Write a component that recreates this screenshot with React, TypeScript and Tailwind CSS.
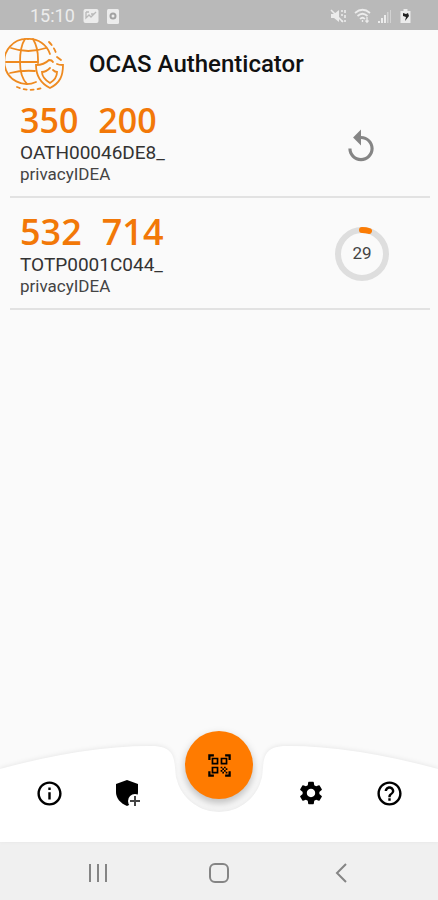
import { MdHelpOutline, MdOutlineInfo, MdQrCodeScanner, MdReplay, MdSettings } from "react-icons/md";

interface Token {
  label: string;
  issuer: string;
  otp: [string, string];
  type: "hotp" | "totp";
  remaining?: number;
}

const tokens: Token[] = [
  { label: "OATH00046DE8_", issuer: "privacyIDEA", otp: ["350", "200"], type: "hotp" },
  { label: "TOTP0001C044_", issuer: "privacyIDEA", otp: ["532", "714"], type: "totp", remaining: 29 },
];

export default function App() {
  return (
    <div className="flex min-h-screen flex-col bg-[#fafafa] font-[Roboto,sans-serif] text-black">
      <StatusBar />
      <header className="flex h-[67px] items-center gap-6 pl-[5px]">
        <Logo />
        <h1 className="text-2xl font-medium text-[#111]">OCAS Authenticator</h1>
      </header>
      <main className="flex-1">
        <ul>
          {tokens.map(t => (
            <TokenRow key={t.label} token={t} />
          ))}
        </ul>
      </main>
      <BottomNav />
      <SystemNav />
    </div>
  );
}

function StatusBar() {
  return (
    <div className="flex h-[30px] items-center justify-between bg-[#b9b9b9] pr-[27px] pl-[30px] text-[#ececec]">
      <div className="flex items-center gap-2 pt-[2px]">
        <span className="text-lg leading-none">15:10</span>
        <svg className="h-[14px] w-4" viewBox="0 0 16 14">
          <rect x="0.5" width="15" height="14" rx="2" fill="currentColor" />
          <path d="M3 3v6l3-3 2 2 5-5M3 3h3M8 5h3" fill="none" stroke="#b9b9b9" strokeWidth="1.3" />
        </svg>
        <svg className="h-[15px] w-3" viewBox="0 0 12 15">
          <rect width="12" height="15" rx="1.5" fill="currentColor" />
          <circle cx="6" cy="7" r="2.5" fill="none" stroke="#a2a2a2" strokeWidth="2" />
        </svg>
      </div>
      <div className="flex items-center gap-1 pt-[2px]">
        <svg className="h-4 w-4" viewBox="0 0 16 16" fill="currentColor">
          <path d="M1 6h3l5-4v12l-5-4H1z" />
          <path d="M1 2l12 12M12 2v2M12 6v2M12 12v2M15 2v3M15 7v3M15 12v2" fill="none" stroke="currentColor" strokeWidth="1.6" />
        </svg>
        <svg className="ml-1 h-4 w-[18px]" viewBox="0 0 18 16" fill="none" stroke="currentColor" strokeWidth="1.7">
          <path d="M1 5q7.500-6.500 15 0M3.500 8q5-4.500 10 0M6 11q2.500-2.500 5 0" />
          <path d="M8.500 12v2M13 9v5M11.500 12.500l1.500 1.700 1.500-1.700" strokeWidth="1.3" />
        </svg>
        <svg className="h-4 w-4" viewBox="0 0 16 16" fill="currentColor">
          <path d="M2 13h2v2H2zM5 10h2v5H5zM8 7h2v8H8z" />
          <path d="M11 4h1.500v11H11zM14 2h1v13h-1z" opacity="0.5" />
        </svg>
        <svg className="ml-1 h-4 w-[11px]" viewBox="0 0 11 16">
          <path d="M0.500 3h3V1h4v2h3v12h-10z" fill="currentColor" />
          <path d="M3 5l3 1 2-1 1 3-4 5 1-4-3-1z" fill="#222" />
        </svg>
      </div>
    </div>
  );
}

function Logo() {
  return (
    <svg className="h-[58px] w-[60px]" viewBox="0 0 60 58" fill="none" stroke="#ee8a20" strokeWidth="1.8" strokeLinecap="round">
      <path d="M45 19A22 22 0 0 0 23 4A22.500 22.500 0 1 0 31 47" />
      <path d="M20 4C16 10 15 18 15 27s2 17 7 22" />
      <path d="M28 4c3 5 5 12 5 20v4" />
      <path d="M6 13q17 6 35 0M1 27h31M5 38q12-3 25-2" />
      <path d="M44 7q5 5 7 11" strokeDasharray="4 4" />
      <path d="M12 52q12 5 25 1" strokeDasharray="3 4" />
      <path d="M52 29c2 1 4 1 6 1 0 11-3 18-13 23-10-5-14-12-14-23 6 0 10-2 13-5q3 0 4 2" />
      <path d="M48 35q2 2 4 2c0 5-2 8-7 11-5-3-8-6-8-11 3 0 6-2 8-4" />
      <path d="M52 22l4 3" />
    </svg>
  );
}

function TokenRow({ token }: { token: Token }) {
  const otpSize = token.type === "hotp" ? "text-[34px]" : "text-[36px]";

  return (
    <li className="relative mr-2 ml-[10px] flex h-28 items-start justify-between pr-10 pl-[10px]">
      <div>
        <p className={`flex gap-5 font-['Open_Sans',sans-serif] leading-[46px] font-semibold text-[#f27808] ${otpSize}`}>
          {token.otp.map(part => (
            <span key={part}>{part}</span>
          ))}
        </p>
        <p className="text-[19px] leading-5 text-[#333]">{token.label}</p>
        <p className="text-[17px] leading-[22px] text-[#444]">{token.issuer}</p>
      </div>
      {token.type === "hotp" ? (
        <button type="button" aria-label="Next code" className="mt-[31px] mr-[10px] text-[#858585]">
          <MdReplay className="size-[38px]" />
        </button>
      ) : (
        <Countdown seconds={token.remaining ?? 30} />
      )}
      <hr className="absolute inset-x-0 bottom-[11px] border-t-2 border-[#e2e2e2]" />
    </li>
  );
}

function Countdown({ seconds }: { seconds: number }) {
  return (
    <div className="relative mt-[17px] flex size-14 items-center justify-center">
      <svg className="absolute inset-0" viewBox="0 0 56 56" fill="none" strokeWidth="6">
        <circle cx="28" cy="28" r="24" stroke="#dedede" />
        <path d="M28 4q4 0 7 1" stroke="#fb7c05" strokeLinecap="round" />
      </svg>
      <span className="relative text-[17px] text-[#444]">{seconds}</span>
    </div>
  );
}

function BottomNav() {
  return (
    <nav className="relative h-[98px]">
      <svg
        className="absolute inset-0 h-full w-full overflow-visible drop-shadow-[0_-1px_2px_rgba(0,0,0,0.07)]"
        viewBox="0 0 438 98"
        preserveAspectRatio="none"
      >
        <path
          d="M0 25Q85 2 150 2C170 2 174 9 175 24A44 44 0 0 0 263 24C264 9 268 2 288 2Q353 2 438 25V98H0Z"
          fill="#fff"
        />
      </svg>
      <div className="relative grid h-full grid-cols-[1fr_1fr_106px_1fr_1fr] items-center px-[10px]">
        <NavButton label="About">
          <MdOutlineInfo className="size-[29px]" />
        </NavButton>
        <NavButton label="Add token">
          <ShieldPlusIcon />
        </NavButton>
        <span />
        <NavButton label="Settings">
          <MdSettings className="size-7" />
        </NavButton>
        <NavButton label="Help">
          <MdHelpOutline className="size-[29px]" />
        </NavButton>
      </div>
      <button
        type="button"
        aria-label="Scan QR code"
        className="absolute -top-[13px] left-1/2 flex size-[68px] -translate-x-1/2 items-center justify-center rounded-full bg-[#ff7b00] shadow-[0_4px_8px_rgba(0,0,0,0.25)]"
      >
        <MdQrCodeScanner className="size-[27px]" />
      </button>
    </nav>
  );
}

function ShieldPlusIcon() {
  return (
    <svg className="size-7" viewBox="0 0 28 28">
      <path d="M14 1L25 5v8c0 6-4 11-11 14C7 24 3 19 3 13V5z" fill="#000" />
      <circle cx="22" cy="22" r="7" fill="#fff" />
      <path d="M22 17v10M17 22h10" stroke="#444" strokeWidth="2" />
    </svg>
  );
}

function NavButton({ label, children }: { label: string; children: React.ReactNode }) {
  return (
    <button type="button" aria-label={label} className="flex items-center justify-center">
      {children}
    </button>
  );
}

function SystemNav() {
  return (
    <div className="flex h-[58px] items-center justify-around bg-[#f0f0f0] px-[37px] pt-1 text-[#858585]">
      <button type="button" aria-label="Recents">
        <svg className="size-5" viewBox="0 0 20 20" fill="none" stroke="currentColor" strokeWidth="2">
          <path d="M2 1v18M10 1v18M18 1v18" />
        </svg>
      </button>
      <button type="button" aria-label="Home">
        <svg className="size-5" viewBox="0 0 20 20" fill="none" stroke="currentColor" strokeWidth="2">
          <rect x="1" y="1" width="18" height="18" rx="5" />
        </svg>
      </button>
      <button type="button" aria-label="Back">
        <svg className="size-5" viewBox="0 0 20 20" fill="none" stroke="currentColor" strokeWidth="2">
          <path d="M16 1L7 10l9 9" />
        </svg>
      </button>
    </div>
  );
}
